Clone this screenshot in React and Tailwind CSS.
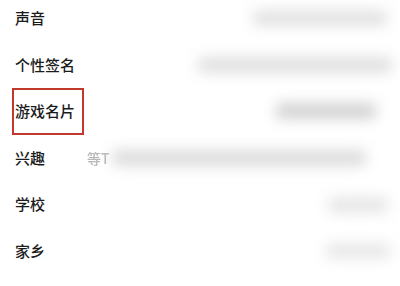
const rows = [
  { label: '声音', bar: 'ml-[166px] w-[134px] bg-[#e2e2e2]' },
  { label: '个性签名', bar: 'ml-[111px] w-[194px] bg-[#e0e0e0]' },
  { label: '游戏名片', bar: 'ml-[189px] w-[100px] bg-[#d2d2d2]', active: true },
  { label: '兴趣', prefix: '等T', bar: 'ml-[2px] w-[254px] bg-[#dcdcdc]' },
  { label: '学校', bar: 'ml-[241px] w-[60px] bg-[#e6e6e6]' },
  { label: '家乡', bar: 'ml-[239px] w-[64px] bg-[#e8e8e8]' },
];

function ProfileRow({ label, prefix, bar, active }) {
  return (
    <div className="flex h-[46.6px] items-center">
      <div className="w-[87px] pl-[12px]">
        <span
          className={
            active
              ? 'flex h-[47px] w-[72px] items-center border-2 border-[#c0392b] pl-[1px]'
              : 'flex h-[47px] w-[72px] items-center border-2 border-transparent pl-[1px]'
          }
        >
          {label}
        </span>
      </div>
      <div className="flex flex-1 items-center">
        {prefix && <span className="text-[14px] text-[#b8b8b8] blur-[0.4px]">{prefix}</span>}
        <div className={`h-[16px] rounded-sm blur-[7px] ${bar}`} />
      </div>
    </div>
  );
}

export default function App() {
  return (
    <div
      className="h-[286px] w-[400px] overflow-hidden bg-white text-[15px] font-medium text-[#1c1c1c]"
      style={{ fontFamily: '"Noto Sans CJK SC", "Noto Sans", sans-serif' }}
    >
      <div className="-mt-[5px] flex flex-col">
        {rows.map((row) => (
          <ProfileRow key={row.label} {...row} />
        ))}
      </div>
    </div>
  );
}
